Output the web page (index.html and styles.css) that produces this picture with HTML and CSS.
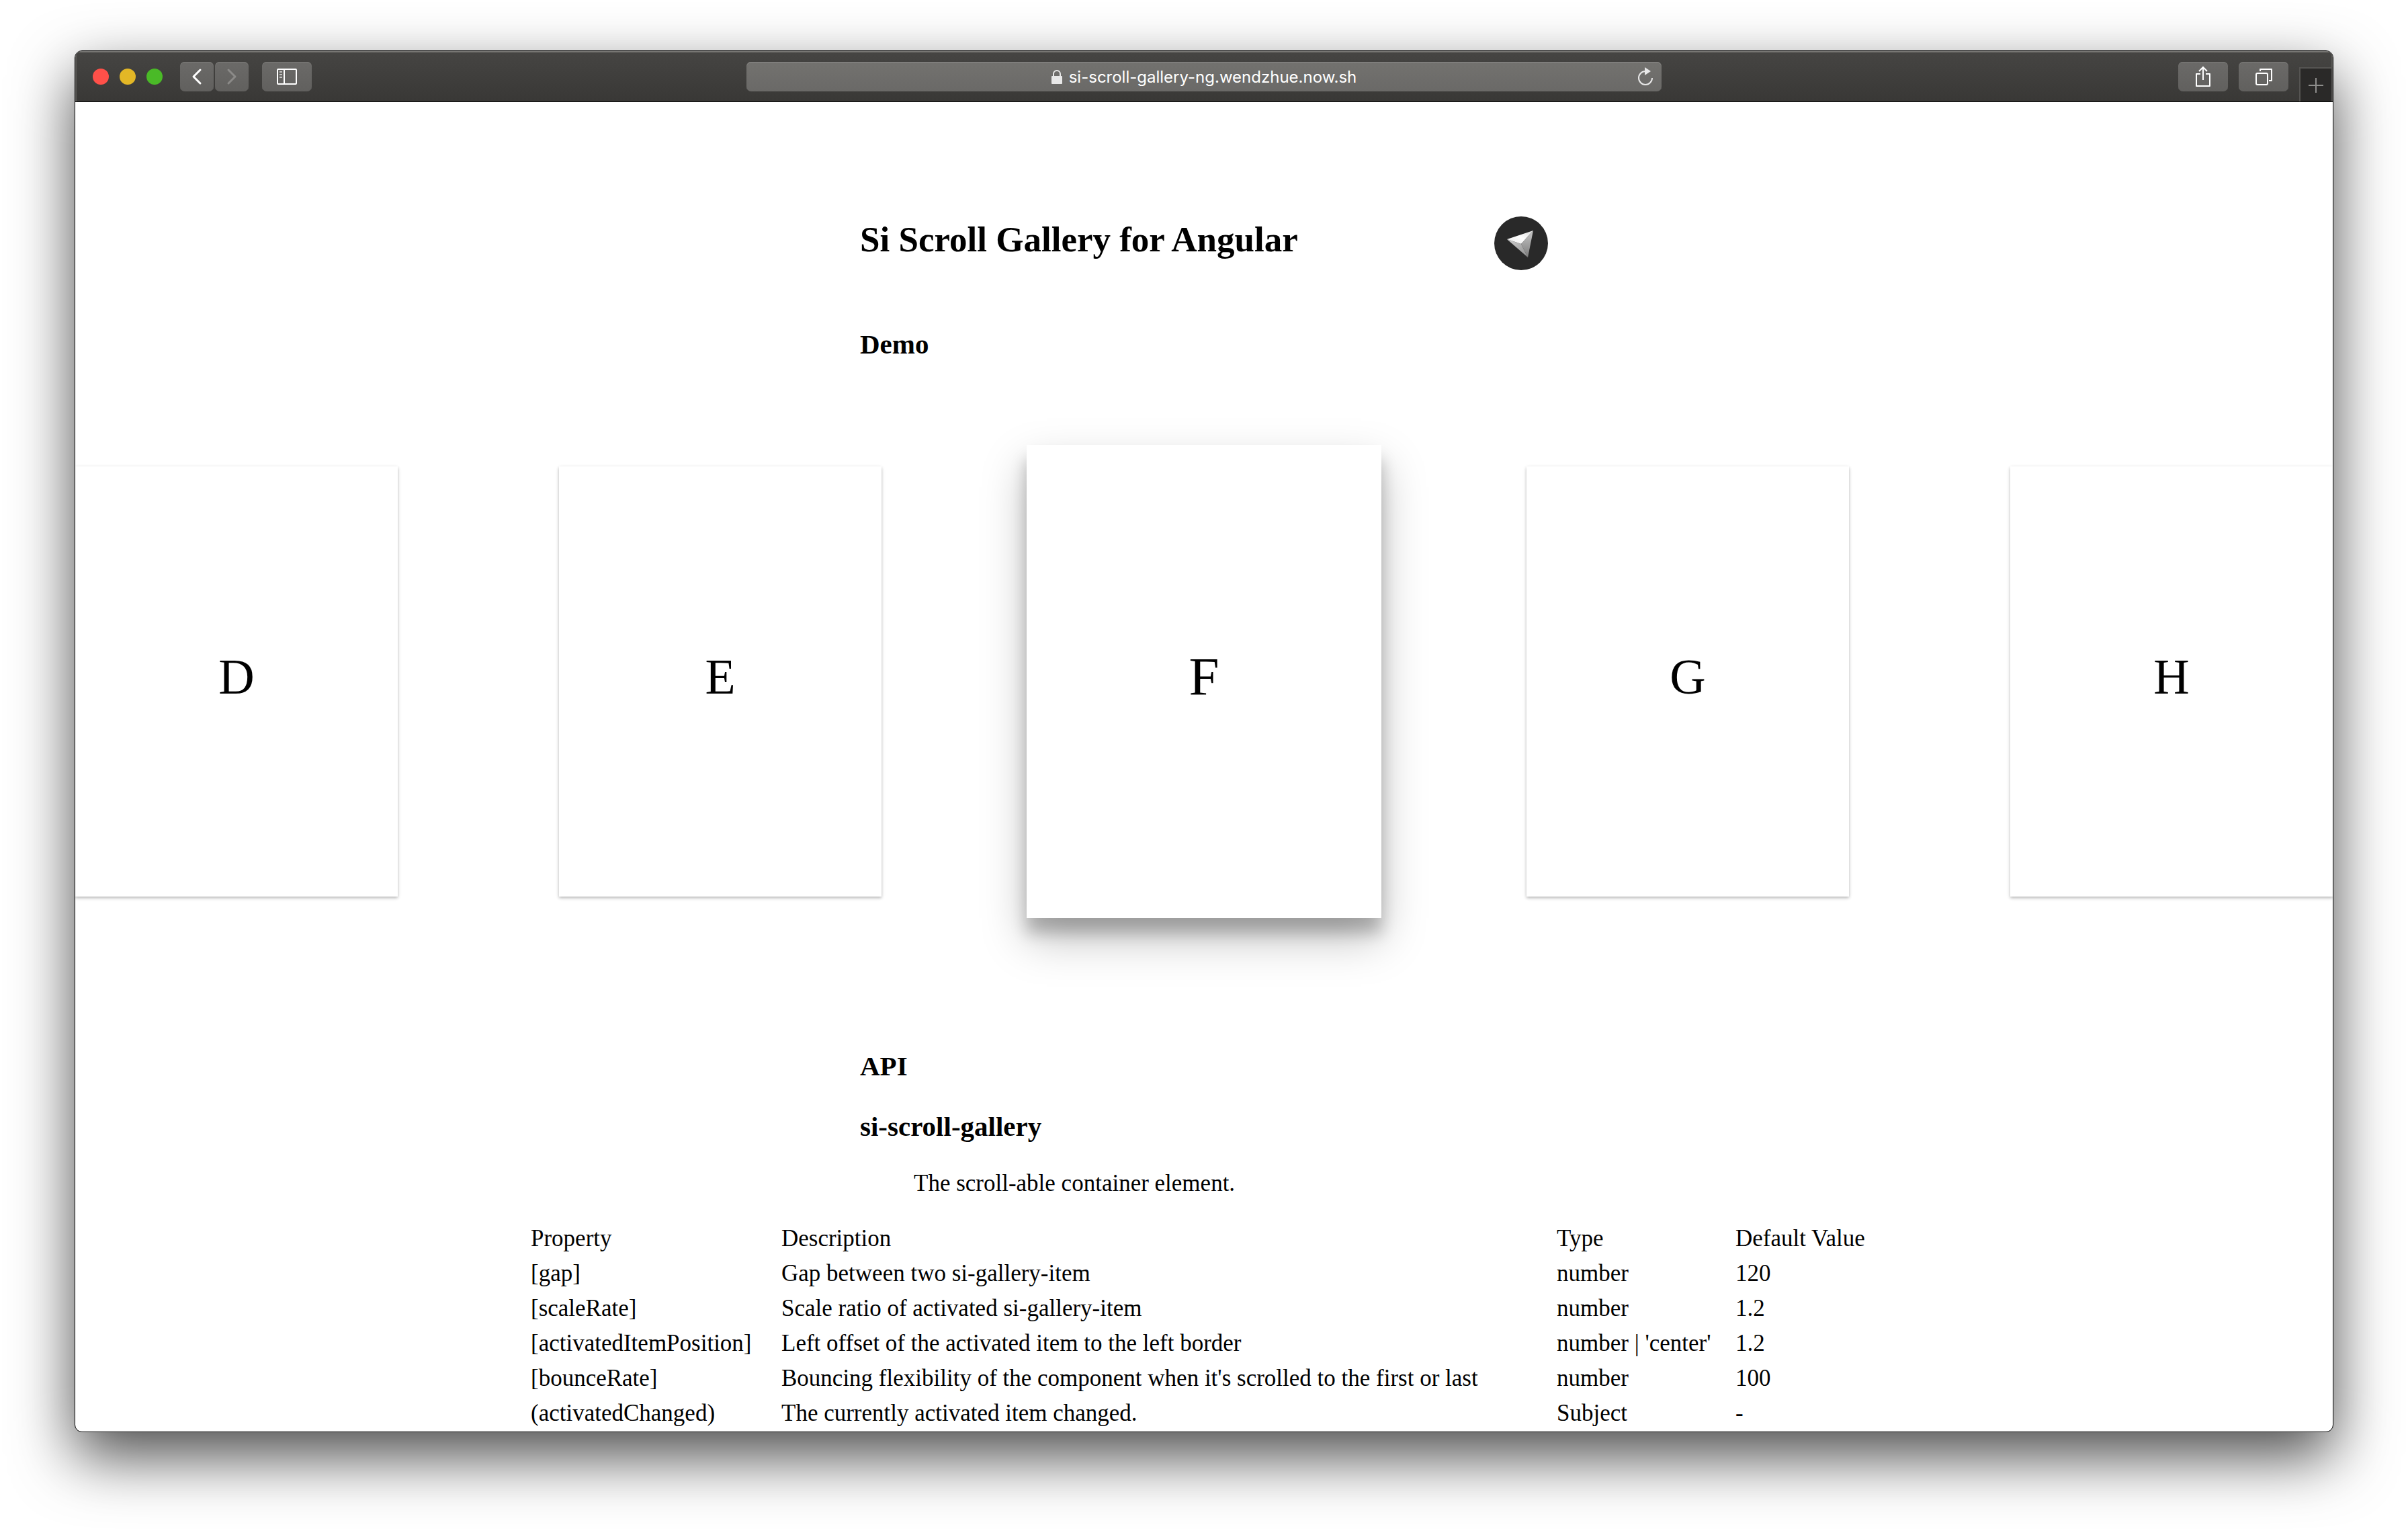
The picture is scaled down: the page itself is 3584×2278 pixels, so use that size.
FILE: index.html
```html
<!DOCTYPE html>
<html lang="en">
<head>
<meta charset="utf-8">
<title>Si Scroll Gallery for Angular</title>
<link rel="stylesheet" href="styles.css">
</head>
<body>
<div class="window">
  <header class="toolbar">
    <div class="toolbar-left">
      <div class="lights">
        <button class="light light-close" aria-label="Close"></button>
        <button class="light light-minimise" aria-label="Minimise"></button>
        <button class="light light-zoom" aria-label="Zoom"></button>
      </div>
      <div class="history">
        <button class="tool tool-narrow" aria-label="Back">
          <svg width="16" height="26" viewBox="0 0 16 26"><path d="M13 3 3 13l10 10" fill="none" stroke="#fff" stroke-width="3" stroke-linecap="round" stroke-linejoin="round"/></svg>
        </button>
        <button class="tool tool-narrow" aria-label="Forward" disabled>
          <svg width="16" height="26" viewBox="0 0 16 26"><path d="m3 3 10 10L3 23" fill="none" stroke="#8b8a88" stroke-width="3" stroke-linecap="round" stroke-linejoin="round"/></svg>
        </button>
      </div>
      <button class="tool" aria-label="Show sidebar">
        <svg width="30" height="24" viewBox="0 0 30 24"><rect x="1" y="1" width="28" height="22" rx="1" fill="none" stroke="#fff" stroke-width="2"/><path d="M11 1v22" stroke="#fff" stroke-width="2"/><path d="M4 5h4M4 9h4M4 13h4" stroke="#c4c4c2" stroke-width="2"/></svg>
      </button>
    </div>
    <div class="address">
      <a class="address-link" href="#">
        <svg width="16" height="22" viewBox="0 0 16 22"><rect y="9" width="16" height="12" rx="1" fill="#e8e8e8"/><path d="M3 10V6a5 5 0 0 1 10 0v4" fill="none" stroke="#e8e8e8" stroke-width="2"/></svg>
        <span>si-scroll-gallery-ng.wendzhue.now.sh</span>
      </a>
      <button class="reload" aria-label="Reload">
        <svg width="24" height="28" viewBox="0 0 24 28"><path d="M12 6A10 10 0 1 0 22 16" fill="none" stroke="#e8e8e8" stroke-width="2"/><path d="m11 0 9 6-9 6z" fill="#e8e8e8"/></svg>
      </button>
    </div>
    <div class="toolbar-right">
      <button class="tool" aria-label="Share">
        <svg width="24" height="32" viewBox="0 0 24 32"><path d="M8 12H2v18h20V12h-6" fill="none" stroke="#fff" stroke-width="2" stroke-linejoin="round"/><path d="M12 21V3M6 8l6-6 6 6" fill="none" stroke="#fff" stroke-width="2"/></svg>
      </button>
      <button class="tool" aria-label="Show all tabs">
        <svg width="26" height="26" viewBox="0 0 26 26"><rect x="2" y="8" width="17" height="17" rx="2" fill="none" stroke="#fff" stroke-width="2"/><path d="M8 5V2h17v17h-4" fill="none" stroke="#fff" stroke-width="2" stroke-linejoin="round"/></svg>
      </button>
      <button class="new-tab" aria-label="New tab">
        <svg width="22" height="22" viewBox="0 0 22 22"><path d="M11 0v22M0 11h22" stroke="#8e8e8c" stroke-width="2"/></svg>
      </button>
    </div>
  </header>

  <main class="page">
    <div class="column masthead">
      <h1>Si Scroll Gallery for Angular</h1>
      <a href="#" aria-label="Author">
        <svg class="logo" viewBox="0 0 80 80">
          <defs>
            <linearGradient id="top" x1="0" y1="1" x2="1" y2="0"><stop offset="0" stop-color="#e9e9e9"/><stop offset=".5" stop-color="#fff"/><stop offset="1" stop-color="#d8d8d8"/></linearGradient>
            <linearGradient id="side" x1="0" y1="0" x2="0" y2="1"><stop offset="0" stop-color="#c8c8c8"/><stop offset="1" stop-color="#7b7b7b"/></linearGradient>
            <linearGradient id="under" x1="0" y1="0" x2="1" y2="1"><stop offset="0" stop-color="#d0d0d0"/><stop offset="1" stop-color="#8d8d8d"/></linearGradient>
          </defs>
          <circle cx="40" cy="40" r="40" fill="#292929"/>
          <path d="M19 34 58 21 40 41z" fill="url(#top)"/>
          <path d="M58 21 50 61 40 41z" fill="url(#side)"/>
          <path d="M19 34 40 41 50 61z" fill="url(#under)"/>
        </svg>
      </a>
    </div>
    <div class="column"><h2>Demo</h2></div>

    <section class="gallery" aria-label="Demo gallery">
      <div class="card">D</div>
      <div class="card">E</div>
      <div class="card card-active">F</div>
      <div class="card">G</div>
      <div class="card">H</div>
    </section>

    <div class="column api">
      <h2>API</h2>
      <h2>si-scroll-gallery</h2>
      <p>The scroll-able container element.</p>
    </div>

    <table class="props">
      <colgroup><col class="col-property"><col class="col-description"><col class="col-type"><col class="col-default"></colgroup>
      <thead>
        <tr><th>Property</th><th>Description</th><th>Type</th><th>Default Value</th></tr>
      </thead>
      <tbody>
        <tr><td>[gap]</td><td>Gap between two si-gallery-item</td><td>number</td><td>120</td></tr>
        <tr><td>[scaleRate]</td><td>Scale ratio of activated si-gallery-item</td><td>number</td><td>1.2</td></tr>
        <tr><td>[activatedItemPosition]</td><td>Left offset of the activated item to the left border</td><td>number | 'center'</td><td>1.2</td></tr>
        <tr><td>[bounceRate]</td><td>Bouncing flexibility of the component when it's scrolled to the first or last</td><td>number</td><td>100</td></tr>
        <tr><td>(activatedChanged)</td><td>The currently activated item changed.</td><td>Subject</td><td>-</td></tr>
      </tbody>
    </table>
  </main>
</div>
</body>
</html>
```
FILE: styles.css
```css
* {
  box-sizing: border-box;
}

body {
  margin: 0;
  padding: 75px 111px 147px;
  background: #fff;
  color: #000;
  font: 35px/52px "Liberation Serif", serif;
}

button {
  padding: 0;
  border: 0;
}

svg {
  display: block;
}

.window {
  overflow: hidden;
  border: 1px solid #000;
  border-radius: 11px;
  background: #fff;
  box-shadow: 0 36px 90px rgba(0, 0, 0, 0.7);
}

/* Browser toolbar */

.toolbar {
  display: grid;
  grid-template-columns: 1fr minmax(0, 1362px) 1fr;
  align-items: center;
  height: 76px;
  border-bottom: 1px solid #000;
  background: linear-gradient(#464543, #393836);
  box-shadow: inset 0 2px #777673, inset 2px 0 #5c5b58, inset -2px 0 #5c5b58;
}

.toolbar-left,
.toolbar-right,
.lights,
.history {
  display: flex;
  align-items: center;
}

.toolbar-left {
  padding-left: 26px;
}

.lights {
  gap: 16px;
  margin-right: 26px;
}

.light {
  width: 24px;
  height: 24px;
  border-radius: 50%;
}

.light-close {
  background: #ff5049;
}

.light-minimise {
  background: #e3b726;
}

.light-zoom {
  background: #4aba27;
}

.history {
  gap: 2px;
  margin-right: 20px;
}

.tool {
  display: flex;
  align-items: center;
  justify-content: center;
  width: 74px;
  height: 44px;
  border-radius: 7px;
  background: linear-gradient(#6b6a68, #61605e);
  box-shadow: inset 0 1px #7d7c7a;
}

.tool-narrow {
  width: 50px;
}

.address {
  display: grid;
  grid-template-columns: 48px 1fr 48px;
  align-items: center;
  height: 44px;
  border-radius: 7px;
  background: linear-gradient(#73726f, #6a6967);
  box-shadow: inset 0 1px #8b8a88;
}

.address-link {
  display: flex;
  grid-column: 2;
  align-items: center;
  justify-content: center;
  gap: 10px;
  padding-top: 2px;
  color: #fff;
  font: 24px/32px Inter, sans-serif;
  text-decoration: none;
}

.reload {
  justify-self: center;
  background: none;
}

.toolbar-right {
  align-self: stretch;
  justify-content: flex-end;
  gap: 16px;
}

.new-tab {
  display: flex;
  align-items: center;
  justify-content: center;
  align-self: flex-end;
  width: 50px;
  height: 51px;
  border: solid #555452;
  border-width: 2px 2px 0 2px;
  background: #2a2928;
}

/* Page */

.page {
  padding: 170px 0 1px;
}

.column {
  max-width: 1024px;
  margin: 0 auto;
}

.masthead {
  display: flex;
  align-items: flex-start;
  justify-content: space-between;
  padding-bottom: 84px;
}

.logo {
  width: 80px;
  height: 80px;
}

h1,
h2,
p {
  margin: 0;
}

h1 {
  font-size: 53px;
  line-height: 68px;
}

h2 {
  font-size: 41px;
  line-height: 52px;
}

.gallery {
  display: flex;
  align-items: center;
  justify-content: space-between;
  overflow: hidden;
  padding: 124px 0 194px;
}

.card {
  display: flex;
  flex: none;
  align-items: center;
  justify-content: center;
  width: 480px;
  height: 640px;
  padding-bottom: 14px;
  background: #fff;
  font-size: 74px;
  line-height: 100px;
  box-shadow: 0 2px 6px rgba(0, 0, 0, 0.12), 0 2px 4px rgba(0, 0, 0, 0.2);
}

.card-active {
  width: 528px;
  height: 704px;
  margin: 0 -24px;
  font-size: 81px;
  box-shadow: 0 31px 62px rgba(0, 0, 0, 0.25), 0 22px 22px rgba(0, 0, 0, 0.22);
}

.api h2 + h2 {
  margin-top: 38px;
}

.api p {
  margin: 33px 80px 30px;
}

.props {
  width: 2004px;
  max-width: 100%;
  margin: 0 auto;
  border-collapse: collapse;
  table-layout: fixed;
}

.col-property {
  width: 373px;
}

.col-description {
  width: 1154px;
}

.col-type {
  width: 266px;
}

th,
td {
  padding: 0;
  font-weight: 400;
  text-align: left;
  white-space: nowrap;
}
```
